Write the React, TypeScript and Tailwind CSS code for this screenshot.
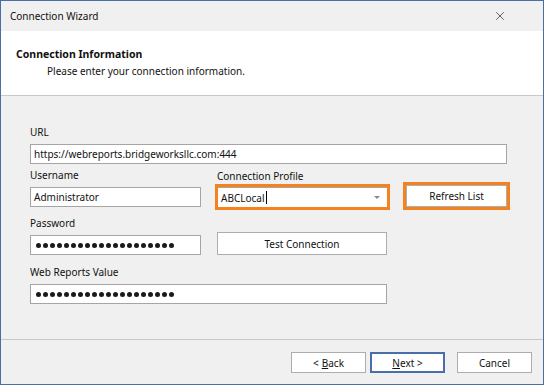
import { X } from "lucide-react";

const font = { fontFamily: '"Noto Sans", "Liberation Sans", sans-serif' };

function Dots() {
  return (
    <div className="flex items-center gap-[2px] pl-[5px]">
      {Array.from({ length: 20 }).map((_, i) => (
        <span key={i} className="block h-[5px] w-[5px] rounded-full bg-[#1a1a1a]" />
      ))}
    </div>
  );
}

function Field({ w, children }: { w: string; children: React.ReactNode }) {
  return (
    <div className={`${w} flex h-[20px] items-center border border-[#a5a5a5] bg-white`}>{children}</div>
  );
}

export default function App() {
  return (
    <div
      className="flex h-[385px] w-[544px] flex-col border border-[#4a6ea9] bg-[#f0f0f0] text-[10px] leading-[16px] text-[#111]"
      style={font}
    >
      {/* Title bar */}
      <div className="flex h-[30px] shrink-0 items-center justify-between pl-[9px] pr-[36px]">
        <span>Connection Wizard</span>
        <X size={14} strokeWidth={1.2} className="text-[#222]" />
      </div>

      {/* Header */}
      <div className="h-[65px] shrink-0 border-b border-[#c8c8c8] bg-white pl-[15px] pt-[15px]">
        <div className="text-[10.5px] font-bold">Connection Information</div>
        <div className="mt-[1px] pl-[31px]">Please enter your connection information.</div>
      </div>

      {/* Body */}
      <div className="flex-1 pl-[29px]">
        <div className="mt-[28px]">URL</div>
        <div className="mt-[4px]">
          <Field w="w-[477px]">
            <span className="pl-[3px]">https://webreports.bridgeworksllc.com:444</span>
          </Field>
        </div>

        <div className="flex items-start">
          <div className="w-[171px]">
            <div className="mt-[3px]">Username</div>
            <div className="mt-[4px]">
              <Field w="w-[171px]">
                <span className="pl-[3px]">Administrator</span>
              </Field>
            </div>
          </div>
          <div className="ml-[14px]">
            <div className="mt-[4px] pl-[2px]">Connection Profile</div>
            <div className="h-[26px] w-[175px] border-[3px] border-[#f5821f]">
              <div className="flex h-full items-center border-t border-[#a5a5a5] bg-white pl-[3px] pr-[7px]">
                <span>ABCLocal</span>
                <span className="ml-[1px] block h-[13px] w-[1px] bg-black" />
                <span className="ml-auto block h-0 w-0 border-x-[3.5px] border-t-[3.5px] border-x-transparent border-t-[#8a8a8a]" />
              </div>
            </div>
          </div>
          <div className="ml-[13px] mt-[18px] h-[28px] w-[107px] border-[3px] border-[#f5821f]">
            <button className="flex h-full w-full items-center justify-center border border-[#adadad] bg-white">
              Refresh List
            </button>
          </div>
        </div>

        <div className="mt-[5px] flex items-start">
          <div className="w-[171px]">
            <div>Password</div>
            <div className="mt-[4px]">
              <Field w="w-[171px]">
                <Dots />
              </Field>
            </div>
          </div>
          <button className="ml-[16px] mt-[17px] flex h-[23px] w-[170px] items-center justify-center border border-[#adadad] bg-white">
            Test Connection
          </button>
        </div>

        <div className="mt-[9px]">Web Reports Value</div>
        <div className="mt-[4px]">
          <Field w="w-[357px]">
            <Dots />
          </Field>
        </div>
      </div>

      {/* Footer */}
      <div className="flex h-[45px] shrink-0 items-start justify-end gap-[4px] border-t border-[#c8c8c8] pr-[11px] pt-[12px]">
        <button className="flex h-[21px] w-[75px] items-center justify-center border border-[#adadad] bg-white">
          &lt; <span className="ml-[3px] underline">B</span>ack
        </button>
        <button className="flex h-[21px] w-[75px] items-center justify-center border-2 border-[#4a6ea9] bg-white">
          <span className="underline">N</span>ext &gt;
        </button>
        <button className="ml-[8px] flex h-[21px] w-[75px] items-center justify-center border border-[#adadad] bg-white">
          Cancel
        </button>
      </div>
    </div>
  );
}
